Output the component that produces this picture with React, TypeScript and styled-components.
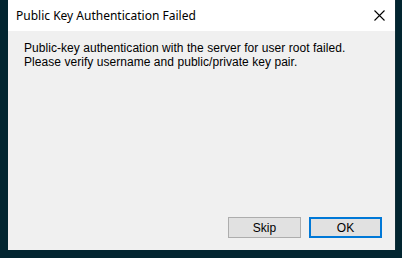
import React from 'react';
import styled, { createGlobalStyle } from "styled-components";

const GlobalStyle = createGlobalStyle`
  html, body {
    margin: 0;
    padding: 0;
    background: #022530;
  }
  body {
    width: 402px;
    height: 258px;
    overflow: hidden;
  }
`

const Screen = styled.div`
  padding-left: 8px;
  display: flex;
`

const Window = styled.div`
  width: 387px;
  height: 250px;
  background: #f0f0f0;
  display: flex;
  flex-direction: column;
  border-right: 1px solid #0f2d36;
`

const TitleBar = styled.div`
  height: 31px;
  background: #ffffff;
  display: flex;
  align-items: center;
  justify-content: space-between;
  padding-left: 8px;
`

const Title = styled.div`
  font-family: "Noto Sans", "Liberation Sans", sans-serif;
  font-size: 12px;
  color: #000;
  padding-bottom: 1px;
`

const CloseButton = styled.div`
  width: 32px;
  height: 31px;
  display: flex;
  align-items: center;
  justify-content: center;
`

const Body = styled.div`
  flex: 1;
  padding: 10px 16px 0;
  font-family: "Liberation Sans", Arial, sans-serif;
  font-size: 12px;
  line-height: 14px;
  letter-spacing: 0.05px;
  color: #000;
`

const Footer = styled.div`
  display: flex;
  justify-content: flex-end;
  gap: 8px;
  padding: 0 13px 12px 0;
`

const Button = styled.button<{ $default?: boolean }>`
  width: 73px;
  height: 21px;
  box-sizing: border-box;
  background: #e1e1e1;
  border: ${p => p.$default ? "2px solid #0078d7" : "1px solid #adadad"};
  font-family: "Liberation Sans", Arial, sans-serif;
  font-size: 12px;
  color: #000;
  padding: 0;
`

export default function App() {
    return (
        <>
            <GlobalStyle/>
            <Screen>
                <Window>
                    <TitleBar>
                        <Title>Public Key Authentication Failed</Title>
                        <CloseButton>
                            <svg width="11" height="11" viewBox="0 0 11 11">
                                <path d="M0.5 0.5 L10.5 10.5 M10.5 0.5 L0.5 10.5" stroke="#000" strokeWidth="1.1"/>
                            </svg>
                        </CloseButton>
                    </TitleBar>
                    <Body>
                        Public-key authentication with the server for user root failed.<br/>
                        Please verify username and public/private key pair.
                    </Body>
                    <Footer>
                        <Button>Skip</Button>
                        <Button $default>OK</Button>
                    </Footer>
                </Window>
            </Screen>
        </>
    );
}
